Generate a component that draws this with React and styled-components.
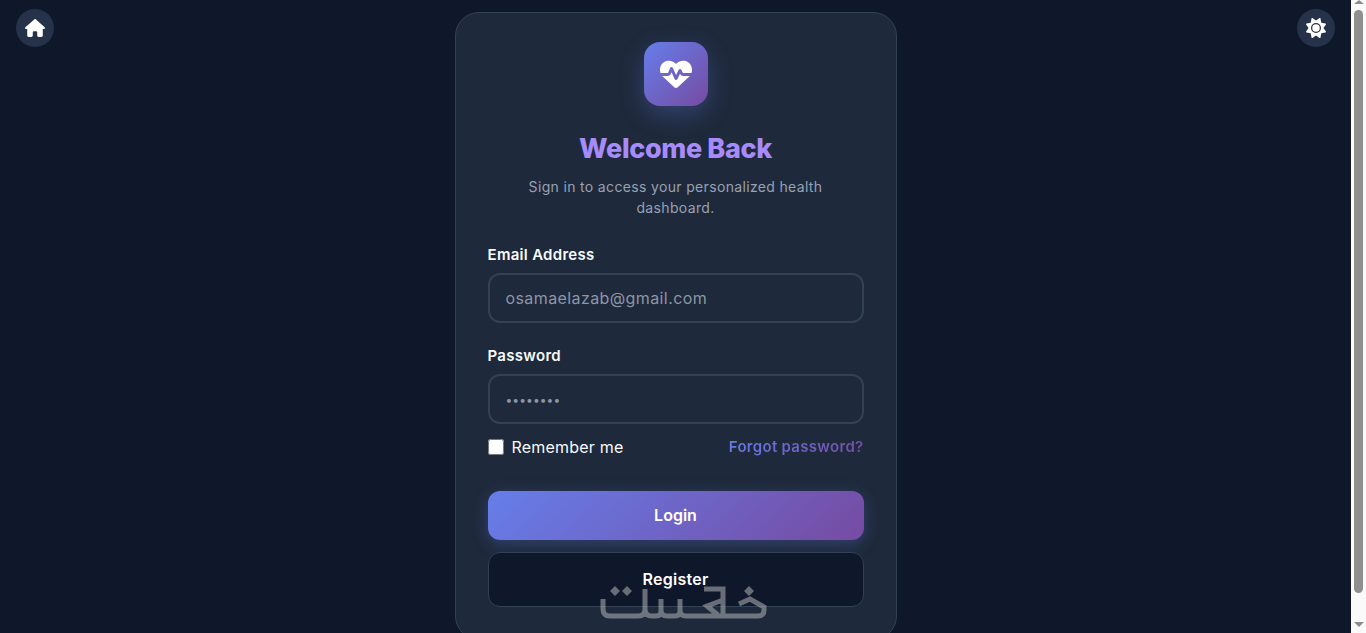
import React from 'react'
import styled, { createGlobalStyle } from 'styled-components'
import { FaHouse, FaSun, FaHeartPulse } from 'react-icons/fa6'

const FONT = `Inter, 'Noto Sans', sans-serif`
const GRADIENT = 'linear-gradient(135deg, #667eea 0%, #764ba2 100%)'

const GlobalStyle = createGlobalStyle`
  body {
    margin: 0 15px 0 0;
    background: #0f172a;
    font-family: ${FONT};
  }
`

const Page = styled.div`
  position: relative;
  display: flex;
  justify-content: center;
  padding: 12px 0;
  min-height: 100vh;
  box-sizing: border-box;
`

const RoundButton = styled.button`
  position: absolute;
  top: 9px;
  ${({ side }) => side}: 16px;
  width: 38px;
  height: 38px;
  border: 0;
  border-radius: 50%;
  background: #26324a;
  color: #fff;
  font-size: 20px;
  display: flex;
  align-items: center;
  justify-content: center;
  padding: 0;
`

const Card = styled.main`
  box-sizing: border-box;
  width: 442px;
  padding: 29px 32px 32px;
  background: #1e293b;
  border: 1px solid #334155;
  border-radius: 24px;
  display: flex;
  flex-direction: column;
  align-items: center;
`

const LogoTile = styled.div`
  width: 64px;
  height: 64px;
  border-radius: 16px;
  background: ${GRADIENT};
  box-shadow: 0 8px 24px rgba(102, 126, 234, 0.3);
  color: #fff;
  font-size: 32px;
  display: flex;
  align-items: center;
  justify-content: center;
`

const Title = styled.h1`
  margin: 25px 0 0;
  font-size: 27px;
  line-height: 36px;
  font-weight: 800;
  letter-spacing: -0.35px;
  color: #a78bfa;
`

const Subtitle = styled.p`
  margin: 9px 0 0;
  width: 320px;
  text-align: center;
  font-size: 14px;
  line-height: 21px;
  letter-spacing: 0.34px;
  color: #98a2b3;
`

const Form = styled.form`
  margin-top: 26px;
  width: 100%;
  display: flex;
  flex-direction: column;
`

const Label = styled.label`
  font-size: 15px;
  line-height: 21px;
  font-weight: 600;
  letter-spacing: 0.3px;
  color: #f8fafc;
  margin-bottom: 8px;
`

const Input = styled.input`
  box-sizing: border-box;
  width: 100%;
  height: 50px;
  padding: 0 16px;
  margin-bottom: 22px;
  background: #1e293b;
  border: 2px solid #334155;
  border-radius: 12px;
  font-family: ${FONT};
  font-size: 16px;
  letter-spacing: 0.4px;
  color: #8c96a6;
  outline: none;
  &[type='password'] {
    margin-bottom: 12px;
    font-size: 12px;
    letter-spacing: 0.1px;
  }
`

const OptionsRow = styled.div`
  display: flex;
  align-items: center;
  justify-content: space-between;
  height: 21px;
  margin-bottom: 34px;
`

const RememberLabel = styled.label`
  display: flex;
  align-items: center;
  gap: 8px;
  font-size: 16px;
  letter-spacing: 0.2px;
  color: #f8fafc;
`

const Checkbox = styled.input`
  width: 16px;
  height: 16px;
  margin: 0;
`

const ForgotLink = styled.a`
  font-size: 15px;
  font-weight: 600;
  letter-spacing: 0.3px;
  background: ${GRADIENT};
  -webkit-background-clip: text;
  background-clip: text;
  color: transparent;
`

const LoginButton = styled.button`
  height: 49px;
  border: 0;
  border-radius: 12px;
  padding: 0 0 2px;
  background: ${GRADIENT};
  box-shadow: 0 4px 16px rgba(102, 126, 234, 0.3);
  color: #fff;
  font-family: ${FONT};
  font-size: 16px;
  font-weight: 600;
  margin-bottom: 12px;
`

const RegisterButton = styled.button`
  height: 55px;
  border: 1px solid #334155;
  border-radius: 12px;
  padding: 0 0 2px;
  background: #0f172a;
  color: #fff;
  font-family: ${FONT};
  font-size: 16px;
  font-weight: 600;
  letter-spacing: 0.25px;
`

const Watermark = styled.svg`
  position: fixed;
  left: 600px;
  top: 586px;
  width: 168px;
  height: 34px;
  opacity: 0.58;
  pointer-events: none;
`

// the page screenshot shows a classic scrollbar, headless chrome hides the real one
const Scrollbar = styled.div`
  position: fixed;
  top: 0;
  right: 0;
  bottom: 0;
  width: 15px;
  background: #fafafa;
  display: flex;
  flex-direction: column;
  align-items: center;
`

const ScrollArrow = styled.div`
  width: 0;
  height: 0;
  border-left: 5px solid transparent;
  border-right: 5px solid transparent;
  ${({ up }) => (up ? 'border-bottom: 4px solid #8c8c8c;' : 'border-top: 5px solid #8c8c8c;')}
`

const ScrollThumb = styled.div`
  width: 9px;
  height: 583px;
  margin: 6px 0 29px;
  background: #8f8f8f;
  border-radius: 5px;
`

export default function App() {
  return (
    <Page>
      <GlobalStyle />
      <RoundButton side="left" type="button"><FaHouse /></RoundButton>
      <RoundButton side="right" type="button"><FaSun /></RoundButton>
      <Card>
        <LogoTile><FaHeartPulse /></LogoTile>
        <Title>Welcome Back</Title>
        <Subtitle>Sign in to access your personalized health dashboard.</Subtitle>
        <Form>
          <Label>Email Address</Label>
          <Input type="email" defaultValue="osamaelazab@gmail.com" />
          <Label>Password</Label>
          <Input type="password" defaultValue="password" />
          <OptionsRow>
            <RememberLabel><Checkbox type="checkbox" />Remember me</RememberLabel>
            <ForgotLink>Forgot password?</ForgotLink>
          </OptionsRow>
          <LoginButton type="button">Login</LoginButton>
          <RegisterButton type="button">Register</RegisterButton>
        </Form>
      </Card>
      <Watermark viewBox="0 0 168 34" fill="none" stroke="#aaacb2" strokeWidth="5">
        <path d="M3 13V23q0 7 7 7H38q7 0 7-7V3M45 23q0 7 7 7h4q5 0 5-5V13M61 24q0 6 6 6h8q5 0 5-5V13M80 24q0 6 6 6H158q6 0 6-6V21L150 13L139 18" />
        <path d="M104 3H123V31M123 14L107 20L118 29" />
        <path fill="#aaacb2" stroke="none" d="M15 0l5 5-5 5-5-5zM27 0l5 5-5 5-5-5zM149 0l5 5-5 5-5-5z" />
      </Watermark>
      <Scrollbar>
        <ScrollArrow up />
        <ScrollThumb />
        <ScrollArrow />
      </Scrollbar>
    </Page>
  )
}
